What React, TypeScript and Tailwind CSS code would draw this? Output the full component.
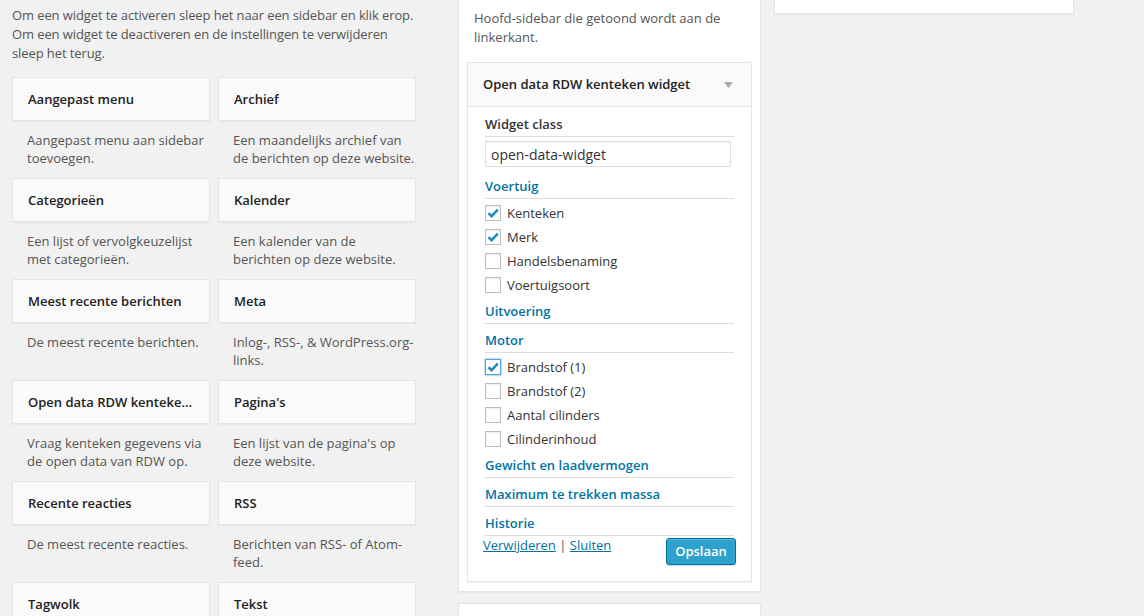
const widgets: { title: string; desc: string[] }[] = [
  { title: "Aangepast menu", desc: ["Aangepast menu aan sidebar", "toevoegen."] },
  { title: "Archief", desc: ["Een maandelijks archief van", "de berichten op deze website."] },
  { title: "Categorieën", desc: ["Een lijst of vervolgkeuzelijst", "met categorieën."] },
  { title: "Kalender", desc: ["Een kalender van de", "berichten op deze website."] },
  { title: "Meest recente berichten", desc: ["De meest recente berichten."] },
  { title: "Meta", desc: ["Inlog-, RSS-, & WordPress.org-", "links."] },
  { title: "Open data RDW kenteken widget", desc: ["Vraag kenteken gegevens via", "de open data van RDW op."] },
  { title: "Pagina's", desc: ["Een lijst van de pagina's op", "deze website."] },
  { title: "Recente reacties", desc: ["De meest recente reacties."] },
  { title: "RSS", desc: ["Berichten van RSS- of Atom-", "feed."] },
  { title: "Tagwolk", desc: ["Een cloud van je meest", "gebruikte tags."] },
  { title: "Tekst", desc: ["Willekeurige tekst of HTML."] },
];

function Check({ checked, focus, label }: { checked?: boolean; focus?: boolean; label: string }) {
  return (
    <div className="h-[24px] flex items-center gap-[6px]">
      <span
        className={
          focus
            ? "w-[16px] h-[16px] bg-white border border-[#5b9dd9] shadow-[0_0_2px_rgba(30,140,190,0.8)] flex items-center justify-center"
            : "w-[16px] h-[16px] bg-white border border-[#bbb] shadow-[inset_0_1px_2px_rgba(0,0,0,0.07)] flex items-center justify-center"
        }
      >
        {checked && (
          <svg width="14" height="14" viewBox="0 0 14 14">
            <path d="M2.5 7.2 L5.6 10.2 L11.8 3.6" fill="none" stroke="#1e8cbe" strokeWidth="2.6" strokeLinejoin="miter" />
          </svg>
        )}
      </span>
      <span className="text-[#333]">{label}</span>
    </div>
  );
}

function Heading({ children, className }: { children: string; className: string }) {
  return (
    <div className={`${className} pb-[2px] border-b border-[#dcdcdc] font-semibold text-[#0074a2]`}>{children}</div>
  );
}

export default function App() {
  return (
    <div className="w-[1144px] h-[616px] overflow-hidden bg-[#f1f1f1] flex items-start font-['Open_Sans',sans-serif] text-[13px] leading-[19px]">
      {/* available widgets */}
      <div className="ml-[12px] w-[403px] shrink-0 pt-[6px]">
        <p className="text-[#555] whitespace-nowrap tracking-[-0.1px]">
          Om een widget te activeren sleep het naar een sidebar en klik erop.
          <br />
          Om een widget te deactiveren en de instellingen te verwijderen
          <br />
          sleep het terug.
        </p>
        <div className="mt-[14px] grid grid-cols-[198px_198px] gap-x-[8px]">
          {widgets.map((w) => (
            <div key={w.title}>
              <div className="h-[44px] px-[15px] flex items-center bg-[#fafafa] border border-[#e5e5e5] shadow-[0_1px_1px_rgba(0,0,0,0.04)]">
                <span className="truncate font-semibold text-[#222]">{w.title}</span>
              </div>
              <div className="h-[57px] pt-[10px] px-[15px] text-[#555] leading-[18px] whitespace-nowrap">
                {w.desc.map((l) => (
                  <div key={l}>{l}</div>
                ))}
              </div>
            </div>
          ))}
        </div>
      </div>

      {/* sidebar */}
      <div className="ml-[43px] w-[303px] shrink-0 flex flex-col">
        <div className="bg-white border border-t-0 border-[#e5e5e5] shadow-[0_1px_1px_rgba(0,0,0,0.04)] px-[8px] pt-[9px] pb-[9px]">
          <p className="px-[7px] text-[#555]">
            Hoofd-sidebar die getoond wordt aan de
            <br />
            linkerkant.
          </p>
          <div className="mt-[15px] border border-[#e5e5e5] shadow-[0_1px_1px_rgba(0,0,0,0.04)]">
            <div className="h-[44px] bg-[#fafafa] border-b border-[#e5e5e5] pl-[15px] pr-[18px] flex items-center justify-between">
              <span className="font-semibold text-[#222]">Open data RDW kenteken widget</span>
              <svg width="9" height="6" viewBox="0 0 9 6">
                <path d="M0 0 H9 L4.5 6 Z" fill="#aaa" />
              </svg>
            </div>
            <div className="bg-white px-[17px] pt-[8px] pb-[16px]">
              <div className="pb-[2px] border-b border-[#dcdcdc] font-semibold text-[#333]">Widget class</div>
              <div className="mt-[4px] h-[26px] w-[246px] border border-[#ddd] shadow-[inset_0_1px_2px_rgba(0,0,0,0.07)] px-[5px] flex items-center text-[14px] text-[#333]">
                open-data-widget
              </div>
              <Heading className="mt-[10px]">Voertuig</Heading>
              <div className="mt-[2px]">
                <Check checked label="Kenteken" />
                <Check checked label="Merk" />
                <Check label="Handelsbenaming" />
                <Check label="Voertuigsoort" />
              </div>
              <Heading className="mt-[5px]">Uitvoering</Heading>
              <Heading className="mt-[7px]">Motor</Heading>
              <div className="mt-[2px]">
                <Check checked focus label="Brandstof (1)" />
                <Check label="Brandstof (2)" />
                <Check label="Aantal cilinders" />
                <Check label="Cilinderinhoud" />
              </div>
              <Heading className="mt-[5px]">Gewicht en laadvermogen</Heading>
              <Heading className="mt-[7px]">Maximum te trekken massa</Heading>
              <Heading className="mt-[7px]">Historie</Heading>
              <div className="-ml-[2px] -mr-[2px] flex items-start justify-between">
                <div className="text-[#555]">
                  <a className="text-[#0074a2] underline">Verwijderen</a> |{" "}
                  <a className="text-[#0074a2] underline">Sluiten</a>
                </div>
                <button className="mt-[2px] h-[27px] w-[70px] rounded-[3px] bg-[#2ea2cc] border border-[#0074a2] shadow-[inset_0_1px_0_rgba(120,200,230,0.5),0_1px_0_rgba(0,0,0,0.15)] text-white font-semibold text-[13px]">
                  Opslaan
                </button>
              </div>
            </div>
          </div>
        </div>
        <div className="mt-[11px] h-[40px] bg-white border border-[#e5e5e5] shadow-[0_1px_1px_rgba(0,0,0,0.04)]" />
      </div>

      {/* second sidebar */}
      <div className="ml-[13px] w-[300px] shrink-0 h-[14px] bg-white border border-t-0 border-[#e5e5e5] shadow-[0_1px_1px_rgba(0,0,0,0.04)]" />
    </div>
  );
}
